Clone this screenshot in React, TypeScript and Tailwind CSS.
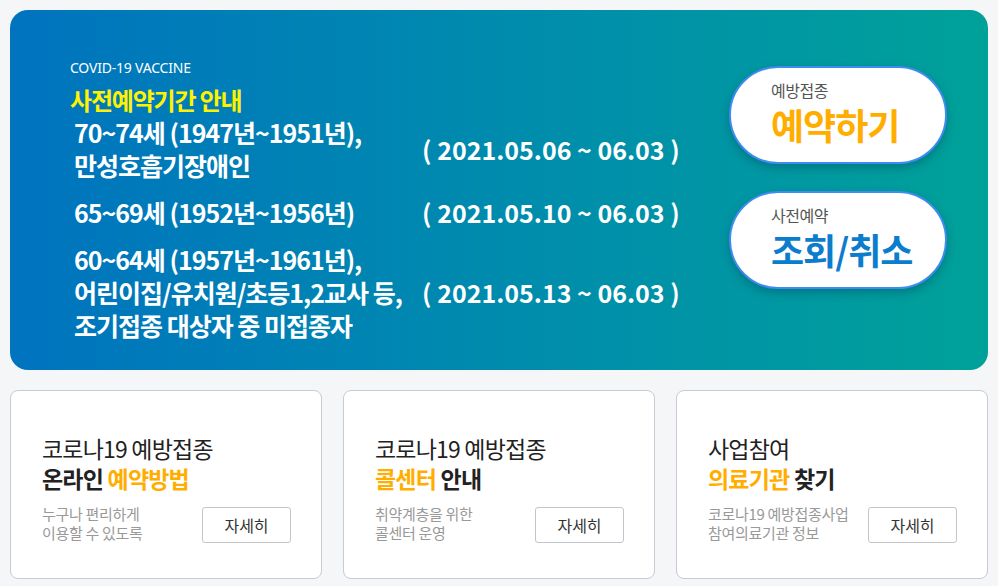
const KR = "font-['Noto_Sans_CJK_KR','Noto_Sans',sans-serif]";

interface Period {
  lines: string[];
  date: string;
  dateLine: number;
}

const periods: Period[] = [
  { lines: ["70~74세 (1947년~1951년),", "만성호흡기장애인"], date: "( 2021.05.06 ~ 06.03 )", dateLine: -1 },
  { lines: ["65~69세 (1952년~1956년)"], date: "( 2021.05.10 ~ 06.03 )", dateLine: 0 },
  {
    lines: ["60~64세 (1957년~1961년),", "어린이집/유치원/초등1,2교사 등,", "조기접종 대상자 중 미접종자"],
    date: "( 2021.05.13 ~ 06.03 )",
    dateLine: 1,
  },
];

interface Card {
  top: string;
  accent: string;
  plain: string;
  accentFirst: boolean;
  desc: string[];
}

const cards: Card[] = [
  { top: "코로나19 예방접종", plain: "온라인", accent: "예약방법", accentFirst: false, desc: ["누구나 편리하게", "이용할 수 있도록"] },
  { top: "코로나19 예방접종", accent: "콜센터", plain: "안내", accentFirst: true, desc: ["취약계층을 위한", "콜센터 운영"] },
  { top: "사업참여", accent: "의료기관", plain: "찾기", accentFirst: true, desc: ["코로나19 예방접종사업", "참여의료기관 정보"] },
];

function PeriodRow({ p }: { p: Period }) {
  return (
    <div className="flex pl-1">
      <div className="w-[348px] shrink-0 tracking-[-1px]">
        {p.lines.map((l) => (
          <div key={l} className="h-[33px] leading-[33px] whitespace-nowrap">
            {l}
          </div>
        ))}
      </div>
      <div className={`flex flex-col whitespace-nowrap tracking-[0px] ${p.dateLine === -1 ? "justify-center" : ""}`}>
        {p.dateLine === -1 ? (
          <div className="leading-[33px]">{p.date}</div>
        ) : (
          p.lines.map((_, i) => (
            <div key={i} className="h-[33px] leading-[33px]">
              {i === p.dateLine ? p.date : ""}
            </div>
          ))
        )}
      </div>
    </div>
  );
}

function PillButton({ small, big, color }: { small: string; big: string; color: string }) {
  return (
    <button className="w-[218px] h-[98px] rounded-full bg-white border-2 border-[#3d8cf0] shadow-[0_4px_10px_rgba(0,60,80,0.35)] flex flex-col items-start justify-center pl-[40px] pb-[6px] text-left">
      <span className="text-[16px] leading-[20px] text-[#555] tracking-[-0.5px]">{small}</span>
      <span className={`mt-[4px] text-[36px] leading-[40px] font-bold tracking-[-1px] ${color}`}>{big}</span>
    </button>
  );
}

export default function App() {
  return (
    <div className={`w-[998px] h-[586px] bg-[#f4f6f8] px-[10px] pt-[10px] flex flex-col gap-[20px] ${KR}`}>
      <div className="h-[360px] shrink-0 rounded-[18px] bg-gradient-to-r from-[#0073bf] to-[#00a199] flex justify-between">
        <div className="pl-[60px] pt-[50px] text-white">
          <div className="text-[14px] leading-[16px] font-['Noto_Sans',sans-serif] tracking-[-0.2px]">COVID-19 VACCINE</div>
          <div className="mt-[8px] text-[24px] leading-[32px] font-bold text-[#fff200] tracking-[-1.2px]">
            사전예약기간 안내
          </div>
          <div className="flex flex-col gap-[14px] text-[25px] font-bold">
            {periods.map((p) => (
              <PeriodRow key={p.date} p={p} />
            ))}
          </div>
        </div>
        <div className="pt-[56px] pr-[41px] flex flex-col gap-[27px]">
          <PillButton small="예방접종" big="예약하기" color="text-[#ffae00]" />
          <PillButton small="사전예약" big="조회/취소" color="text-[#0b7dcc]" />
        </div>
      </div>

      <div className="flex gap-[21px] h-[189px] shrink-0">
        {cards.map((c) => (
          <div key={c.accent} className="flex-1 bg-white border border-[#c9cad2] rounded-[8px] pl-[31px] pr-[30px] pt-[42px]">
            <div className="text-[23px] leading-[30px] text-[#222] tracking-[-0.8px]">{c.top}</div>
            <div className="text-[23px] leading-[30px] font-bold text-[#222] tracking-[-0.8px]">
              {c.accentFirst ? (
                <>
                  <span className="text-[#ffae00]">{c.accent}</span> {c.plain}
                </>
              ) : (
                <>
                  {c.plain} <span className="text-[#ffae00]">{c.accent}</span>
                </>
              )}
            </div>
            <div className="mt-[11px] flex justify-between items-start">
              <div className="text-[15px] leading-[19px] text-[#999] tracking-[-0.3px]">
                {c.desc.map((d) => (
                  <div key={d}>{d}</div>
                ))}
              </div>
              <button className="mt-[3px] w-[89px] h-[36px] border border-[#c4c4cc] rounded-[3px] text-[16px] text-[#333] bg-white">
                자세히
              </button>
            </div>
          </div>
        ))}
      </div>
    </div>
  );
}
